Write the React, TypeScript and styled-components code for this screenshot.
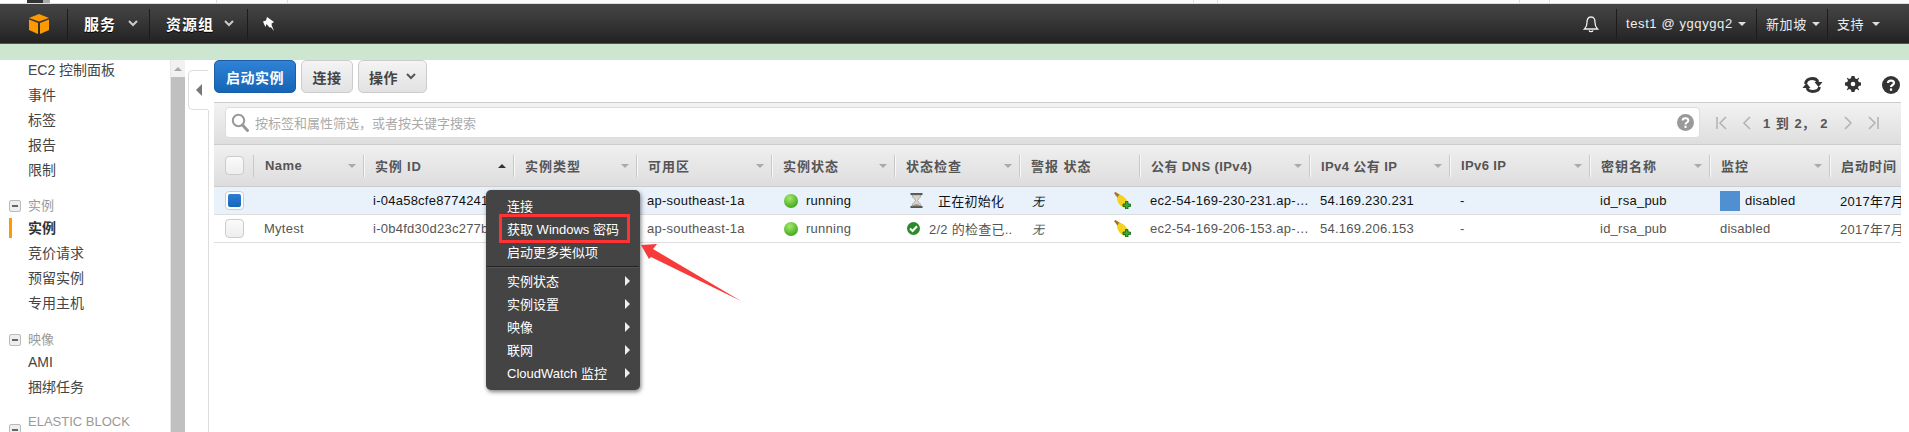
import React from "react";
import styled, { createGlobalStyle } from "styled-components";

const FONT = `"Liberation Sans", "Noto Sans CJK SC", sans-serif`;

const Global = createGlobalStyle`
  html, body { margin: 0; padding: 0; background: #fff; }
  body { font-family: ${FONT}; width: 1909px; height: 432px; overflow: hidden; }
  * { box-sizing: border-box; }
`;

const Page = styled.div`
  position: relative;
  width: 1909px;
  height: 432px;
  overflow: hidden;
  display: flex;
  flex-direction: column;
`;

/* remnant strip at the very top */
const TopStrip = styled.div`
  height: 4px;
  display: flex;
  flex: none;
  background: #fbfbfb;
  border-bottom: 1px solid #ddd;
`;
const StripCell = styled.div<{ $w: number; $dark?: boolean }>`
  width: ${(p) => p.$w}px;
  flex: none;
  border-right: 1px solid #ddd;
  background: ${(p) => (p.$dark ? "linear-gradient(90deg,#fff 0 27px,#333 27px 43px,#aaa 43px 50px,#fff 50px)" : "transparent")};
`;

const Nav = styled.header`
  height: 40px;
  flex: none;
  background: linear-gradient(#444 0%, #3c3c3c 30%, #222 100%);
  display: flex;
  align-items: center;
  color: #fff;
  border-bottom: 1px solid #555;
`;
const NavGroup = styled.div`
  display: flex;
  align-items: center;
  height: 100%;
`;
const NavSpacer = styled.div`
  flex: 1;
`;
const LogoBox = styled.div`
  width: 68px;
  height: 30px;
  padding: 5px 0 0 29px;
  border-right: 1px solid #1c1c1c;
  flex: none;
`;
const NavItem = styled.div<{ $w: number; $pl: number; $plain?: boolean }>`
  width: ${(p) => p.$w}px;
  height: 30px;
  padding-left: ${(p) => p.$pl}px;
  display: flex;
  align-items: center;
  font-size: 15px;
  font-weight: 700;
  letter-spacing: 1px;
  border-right: ${(p) => (p.$plain ? "none" : "1px solid #1c1c1c")};
  text-shadow: 0 1px 0 #000;
  flex: none;
  white-space: nowrap;
`;
const NavRightItem = styled.div<{ $w: number; $pl: number; $border?: boolean }>`
  width: ${(p) => p.$w}px;
  height: 30px;
  padding-left: ${(p) => p.$pl}px;
  display: flex;
  align-items: center;
  font-size: 13px;
  letter-spacing: 0.6px;
  border-right: ${(p) => (p.$border ? "1px solid #1c1c1c" : "none")};
  flex: none;
  white-space: nowrap;
  color: #eee;
`;
const Chevron = styled.svg<{ $ml: number }>`
  margin-left: ${(p) => p.$ml}px;
  flex: none;
`;
const Caret = styled.span<{ $ml: number }>`
  margin-left: ${(p) => p.$ml}px;
  width: 0;
  height: 0;
  border-left: 4px solid transparent;
  border-right: 4px solid transparent;
  border-top: 4px solid #ddd;
  flex: none;
`;

const Notice = styled.div`
  height: 16px;
  flex: none;
  background: #cde6d0;
`;

const Body = styled.div`
  flex: 1;
  min-height: 0;
  display: flex;
  overflow: hidden;
`;

const Sidebar = styled.nav`
  width: 171px;
  flex: none;
  overflow: hidden;
  border-right: 1px solid #e6e6e6;
`;
const SideList = styled.div`
  margin-top: -2px;
`;
const SideItem = styled.div<{ $active?: boolean }>`
  position: relative;
  height: 25px;
  line-height: 25px;
  padding-left: 28px;
  font-size: 14px;
  color: ${(p) => (p.$active ? "#333" : "#444")};
  font-weight: ${(p) => (p.$active ? 700 : 400)};
  white-space: nowrap;
  &::before {
    content: "";
    display: ${(p) => (p.$active ? "block" : "none")};
    position: absolute;
    left: 9px;
    top: 2px;
    width: 3px;
    height: 20px;
    background: #f90;
  }
`;
const SideHead = styled.div<{ $mt: number }>`
  display: flex;
  align-items: center;
  margin-top: ${(p) => p.$mt}px;
  padding-left: 9px;
  min-height: 20px;
  font-size: 13px;
  color: #999;
  line-height: 16px;
`;
const MinusBox = styled.span`
  width: 12px;
  height: 12px;
  margin-right: 7px;
  border: 1px solid #bbb;
  border-radius: 2px;
  background: #eee;
  display: flex;
  align-items: center;
  justify-content: center;
  flex: none;
  &::after {
    content: "";
    width: 6px;
    height: 2px;
    background: #666;
  }
`;

const Scrollbar = styled.div`
  width: 14px;
  flex: none;
  display: flex;
  flex-direction: column;
`;
const ScrollUp = styled.div`
  height: 17px;
  background: #f1f1f1;
  display: flex;
  align-items: center;
  justify-content: center;
  &::after {
    content: "";
    border-left: 4px solid transparent;
    border-right: 4px solid transparent;
    border-bottom: 4px solid #aaa;
  }
`;
const ScrollThumb = styled.div`
  flex: 1;
  background: #c0c0c0;
`;

const CollapseCol = styled.div`
  width: 23px;
  flex: none;
  padding: 10px 0 0 3px;
`;
const CollapseTab = styled.div`
  width: 20px;
  height: 40px;
  border: 1px solid #ddd;
  border-right: none;
  border-radius: 5px 0 0 5px;
  display: flex;
  align-items: center;
  justify-content: center;
  background: #fff;
  &::after {
    content: "";
    border-top: 6px solid transparent;
    border-bottom: 6px solid transparent;
    border-right: 6px solid #777;
  }
`;

const Main = styled.main`
  width: 1693px;
  flex: none;
  background: linear-gradient(90deg, #ddd 1px, transparent 1px) no-repeat 0 50px;
  padding-left: 6px;
  display: flex;
  flex-direction: column;
`;
const Toolbar = styled.div`
  height: 42px;
  flex: none;
  display: flex;
  gap: 5px;
`;
const Btn = styled.button<{ $w: number; $primary?: boolean }>`
  width: ${(p) => p.$w}px;
  height: 33px;
  border-radius: 5px;
  font: 700 14px ${FONT};
  letter-spacing: 0.5px;
  padding: 0;
  color: ${(p) => (p.$primary ? "#fff" : "#444")};
  border: 1px solid ${(p) => (p.$primary ? "#1a5fa8" : "#ccc")};
  background: ${(p) =>
    p.$primary ? "linear-gradient(#2f82d6,#1565b6)" : "linear-gradient(#f4f4f4,#e2e2e2)"};
  display: flex;
  align-items: center;
  justify-content: center;
`;
const ToolIcons = styled.div`
  margin-left: auto;
  width: 98px;
  padding: 16px 0 0 0;
  margin-right: 1px;
  display: flex;
  justify-content: space-between;
  align-items: flex-start;
`;

const FilterBand = styled.div`
  height: 43px;
  flex: none;
  background: linear-gradient(#f2f2f2, #dedede);
  border-top: 1px solid #ccc;
  border-bottom: 1px solid #ccc;
  display: flex;
  align-items: flex-start;
  padding: 4px 0 0 11px;
`;
const SearchBox = styled.div`
  width: 1475px;
  height: 31px;
  background: #fff;
  border: 1px solid #ddd;
  border-radius: 4px;
  display: flex;
  align-items: center;
  padding: 0 5px;
  flex: none;
`;
const Placeholder = styled.span`
  margin-left: 6px;
  flex: 1;
  font-size: 13px;
  color: #aaa;
`;
const Pager = styled.div`
  display: flex;
  align-items: center;
  height: 31px;
  padding-left: 15px;
  flex: none;
`;
const PagerText = styled.span`
  font-size: 13px;
  font-weight: 700;
  color: #555;
  margin: 0 14px 0 10px;
  word-spacing: 2px;
  white-space: nowrap;
`;
const PagerIcon = styled.svg<{ $mr?: number }>`
  margin-right: ${(p) => p.$mr ?? 0}px;
  flex: none;
`;

const COLS = "40px 110px 150px 123px 135px 123px 125px 120px 170px 140px 140px 120px 120px 71px";

const HeadRow = styled.div`
  display: grid;
  grid-template-columns: ${COLS};
  height: 42px;
  flex: none;
  align-items: center;
  background: linear-gradient(#f0f0f0, #dddddd);
  border-bottom: 1px solid #ccc;
  overflow: hidden;
`;
const HeadCell = styled.div<{ $sep?: boolean; $ls: number }>`
  height: 22px;
  display: flex;
  align-items: center;
  justify-content: space-between;
  padding: 0 7px 0 11px;
  font-size: 13px;
  font-weight: 700;
  color: #555;
  letter-spacing: ${(p) => p.$ls}px;
  white-space: nowrap;
  overflow: hidden;
  border-right: ${(p) => (p.$sep === false ? "none" : "1px solid #c8c8c8")};
  box-shadow: ${(p) => (p.$sep === false ? "none" : "1px 0 0 #f8f8f8")};
`;
const CheckCell = styled.div`
  height: 22px;
  padding: 0 0 0 11px;
  display: flex;
  align-items: center;
  border-right: 1px solid #c8c8c8;
`;
const Sort = styled.span<{ $up?: boolean }>`
  flex: none;
  border-left: 4px solid transparent;
  border-right: 4px solid transparent;
  ${(p) => (p.$up ? "border-bottom: 4px solid #333;" : "border-top: 4px solid #aaa;")}
`;
const Box = styled.span<{ $on?: boolean }>`
  width: 19px;
  height: 19px;
  flex: none;
  border: 1px solid #ccc;
  border-radius: 4px;
  background: ${(p) => (p.$on ? "#fff" : "linear-gradient(#fafafa,#eee)")};
  display: flex;
  align-items: center;
  justify-content: center;
  &::after {
    content: "";
    display: ${(p) => (p.$on ? "block" : "none")};
    width: 13px;
    height: 13px;
    border-radius: 2px;
    background: linear-gradient(#2c7fd4, #1766b8);
  }
`;
const Row = styled.div<{ $selected?: boolean }>`
  display: grid;
  grid-template-columns: ${COLS};
  height: 28px;
  flex: none;
  align-items: center;
  background: ${(p) => (p.$selected ? "#e9f1fb" : "#fff")};
  border-bottom: 1px solid #ddd;
  color: ${(p) => (p.$selected ? "#111" : "#555")};
  font-size: 13px;
  letter-spacing: 0.25px;
`;
const Cell = styled.div<{ $pl?: number }>`
  padding-left: ${(p) => p.$pl ?? 10}px;
  display: flex;
  align-items: center;
  white-space: nowrap;
  overflow: hidden;
  height: 100%;
`;
const Dot = styled.span`
  width: 14px;
  height: 14px;
  border-radius: 50%;
  flex: none;
  margin: 0 8px 0 2px;
  background: radial-gradient(circle at 40% 30%, #a6e86a, #4fb32a 65%, #2d8a1a);
`;
const NoAlarm = styled.span`
  font-style: italic;
  font-size: 12px;
`;
const Broom = styled.svg`
  margin-left: auto;
  margin-right: 9px;
  flex: none;
`;
const MonitorSquare = styled.span`
  width: 20px;
  height: 20px;
  background: #5090d0;
  margin-right: 5px;
  flex: none;
`;

const Menu = styled.div`
  position: absolute;
  left: 486px;
  top: 190px;
  width: 154px;
  height: 200px;
  background: #444;
  border-radius: 5px;
  box-shadow: 1px 2px 4px rgba(0, 0, 0, 0.5);
  padding-top: 4px;
  color: #fff;
  font-size: 13px;
`;
const MenuItem = styled.div`
  position: relative;
  height: 23px;
  padding: 0 10px 0 21px;
  display: flex;
  align-items: center;
  justify-content: space-between;
  white-space: nowrap;
`;
const MenuDivider = styled.div`
  height: 1px;
  margin: 3px 1px 2px;
  background: #222;
  box-shadow: 0 1px 0 #555;
`;
const MenuArrow = styled.span`
  border-top: 5px solid transparent;
  border-bottom: 5px solid transparent;
  border-left: 5px solid #eee;
`;
const Highlight = styled.span`
  position: absolute;
  left: 13px;
  top: -3px;
  width: 131px;
  height: 29px;
  border: 3px solid #f33;
`;
const ArrowMark = styled.svg`
  position: absolute;
  left: 636px;
  top: 240px;
`;

const Cube = () => (
  <svg width="20" height="20" viewBox="0 0 20 20">
    <path d="M10 0 L20 4 L10 7.5 L0 4Z" fill="#f90" />
    <path d="M0 5.5 L9 9 V20 L0 16Z" fill="#f90" />
    <path d="M20 5.5 L11 9 V20 L20 16Z" fill="#f90" />
  </svg>
);
const Down = ({ ml, color = "#ccc" }: { ml: number; color?: string }) => (
  <Chevron $ml={ml} width="10" height="7" viewBox="0 0 10 7">
    <path d="M1 1 L5 5 L9 1" fill="none" stroke={color} strokeWidth="2" />
  </Chevron>
);
const Pin = () => (
  <svg width="14" height="14" viewBox="0 0 14 14">
    <path d="M5 0 L12 5 L9.5 6.5 L10 10 L7.5 10.5 L4.5 7 L3.5 10 L2 7 L1 4.5 L4 3.5Z" fill="#fff" />
    <path d="M8 9 L12 14 L10 9Z" fill="#fff" />
  </svg>
);
const Bell = () => (
  <svg width="16" height="18" viewBox="0 0 16 18" fill="none" stroke="#eee" strokeWidth="1.3">
    <path d="M8 2 C4.5 2 4 5 4 7.5 C4 11 3 12.5 1.5 14 H14.5 C13 12.5 12 11 12 7.5 C12 5 11.5 2 8 2Z" />
    <path d="M6 15.5 C6.5 17 9.5 17 10 15.5" />
  </svg>
);
const Refresh = () => (
  <svg width="21" height="18" viewBox="0 0 21 18">
    <path d="M3.5 8 C4 4 7 2.5 10.5 2.5 C13 2.5 15 3.5 16 6" fill="none" stroke="#333" strokeWidth="2.8" />
    <path d="M12.5 6 H20.5 L16.5 11Z" fill="#333" />
    <path d="M17.5 11 C17 14 14 15.5 10.5 15.5 C8 15.5 6 14.5 5 12" fill="none" stroke="#333" strokeWidth="2.8" />
    <path d="M8.5 12 H0.5 L4.5 7Z" fill="#333" />
  </svg>
);
const Gear = () => (
  <svg width="16" height="16" viewBox="0 0 16 16">
    <path
      d="M6.5 0 H9.5 L10 2.3 L11.8 3 L13.8 1.8 L14.2 2.2 L14.2 2.2 L13 4.2 L13.7 6 L16 6.5 V9.5 L13.7 10 L13 11.8 L14.2 13.8 L13.8 14.2 L11.8 13 L10 13.7 L9.5 16 H6.5 L6 13.7 L4.2 13 L2.2 14.2 L1.8 13.8 L3 11.8 L2.3 10 L0 9.5 V6.5 L2.3 6 L3 4.2 L1.8 2.2 L2.2 1.8 L4.2 3 L6 2.3Z M8 5.7 A2.3 2.3 0 1 0 8 10.3 A2.3 2.3 0 1 0 8 5.7Z"
      fill="#333"
      fillRule="evenodd"
    />
  </svg>
);
const Help = ({ size, color }: { size: number; color: string }) => (
  <svg width={size} height={size} viewBox="0 0 18 18">
    <circle cx="9" cy="9" r="9" fill={color} />
    <path d="M6 7 C6 3.7 12 3.7 12 7 C12 9 9 9 9 11" fill="none" stroke="#fff" strokeWidth="2.2" />
    <rect x="7.9" y="12.4" width="2.2" height="2.4" fill="#fff" />
  </svg>
);
const Search = () => (
  <svg width="18" height="19" viewBox="0 0 18 19" fill="none">
    <circle cx="7.5" cy="7.5" r="5.7" stroke="#999" strokeWidth="2" />
    <path d="M11.5 12 L16.5 17.5" stroke="#999" strokeWidth="3" strokeLinecap="round" />
  </svg>
);
const PageIcon = ({ d, mr }: { d: string; mr?: number }) => (
  <PagerIcon $mr={mr} width="13" height="14" viewBox="0 0 13 14" fill="none" stroke="#b4b4b4" strokeWidth="1.6">
    <path d={d} />
  </PagerIcon>
);
const HourglassSvg = styled.svg`
  margin-left: 3px;
  margin-right: 15px;
  flex: none;
`;
const Hourglass = () => (
  <HourglassSvg width="13" height="15" viewBox="0 0 13 15">
    <rect x="0.5" y="0" width="12" height="2" fill="#555" />
    <rect x="0.5" y="13" width="12" height="2" fill="#555" />
    <path d="M2 2 H11 C11 5 7.5 6 7.5 7.5 C7.5 9 11 10 11 13 H2 C2 10 5.5 9 5.5 7.5 C5.5 6 2 5 2 2Z" fill="#d9d4c4" stroke="#888" strokeWidth="0.6" />
    <path d="M3 13 C4 10.5 9 10.5 10 13Z" fill="#9a8f70" />
  </HourglassSvg>
);
const CheckSvg = styled.svg`
  margin-right: 9px;
  flex: none;
`;
const Check = () => (
  <CheckSvg width="13" height="13" viewBox="0 0 13 13">
    <circle cx="6.5" cy="6.5" r="6.5" fill="#2a8a2a" />
    <path d="M3 6.5 L5.6 9 L10 4.2" fill="none" stroke="#fff" strokeWidth="2" />
  </CheckSvg>
);
const BroomIcon = () => (
  <Broom width="17" height="17" viewBox="0 0 17 17">
    <path d="M0 1 L1.5 0 L7 3.5 L4 6.5Z" fill="#a8741a" />
    <path d="M5 3 C8.5 3 13 6 14 12 L11 16 C7 15.5 3 10.5 3 6Z" fill="#f5d21f" />
    <path d="M11.5 9.5 H14 V12 H16.5 V14.5 H14 V17 H11.5 V14.5 H9 V12 H11.5Z" fill="#35b035" stroke="#0e5c0e" strokeWidth="0.8" />
  </Broom>
);

const columns: { label: string; sort?: "up" | "down" | "none"; sep?: boolean; ls: number }[] = [
  { label: "Name", ls: 0.4 },
  { label: "实例 ID", sort: "up", ls: 0.8 },
  { label: "实例类型", ls: 1 },
  { label: "可用区", ls: 1 },
  { label: "实例状态", ls: 1 },
  { label: "状态检查", ls: 1 },
  { label: "警报 状态", sort: "none", ls: 1 },
  { label: "公有 DNS (IPv4)", ls: 0.4 },
  { label: "IPv4 公有 IP", ls: 0.4 },
  { label: "IPv6 IP", ls: 0.4 },
  { label: "密钥名称", ls: 1 },
  { label: "监控", ls: 1 },
  { label: "启动时间", sort: "none", sep: false, ls: 1 },
];

const rows = [
  {
    selected: true,
    name: "",
    id: "i-04a58cfe87742412",
    check: "正在初始化",
    dns: "ec2-54-169-230-231.ap-…",
    ip: "54.169.230.231",
  },
  {
    selected: false,
    name: "Mytest",
    id: "i-0b4fd30d23c277b1",
    check: "2/2 的检查已..",
    dns: "ec2-54-169-206-153.ap-…",
    ip: "54.169.206.153",
  },
];

const menuTop = ["连接", "获取 Windows 密码", "启动更多类似项"];
const menuSub = ["实例状态", "实例设置", "映像", "联网", "CloudWatch 监控"];

export default function App() {
  return (
    <Page>
      <Global />
      <TopStrip>
        <StripCell $w={217} $dark />
        <StripCell $w={71} />
        <StripCell $w={906} />
        <StripCell $w={24} />
        <StripCell $w={302} />
        <StripCell $w={30} />
      </TopStrip>
      <Nav>
        <NavGroup>
          <LogoBox>
            <Cube />
          </LogoBox>
          <NavItem $w={82} $pl={16}>
            服务
            <Down ml={12} />
          </NavItem>
          <NavItem $w={98} $pl={16}>
            资源组
            <Down ml={10} />
          </NavItem>
          <NavItem $w={40} $pl={14} $plain>
            <Pin />
          </NavItem>
        </NavGroup>
        <NavSpacer />
        <NavGroup>
          <NavRightItem $w={34} $pl={0} $border>
            <Bell />
          </NavRightItem>
          <NavRightItem $w={140} $pl={9} $border>
            test1 @ ygqygq2
            <Caret $ml={5} />
          </NavRightItem>
          <NavRightItem $w={71} $pl={9} $border>
            新加坡
            <Caret $ml={5} />
          </NavRightItem>
          <NavRightItem $w={81} $pl={9}>
            支持
            <Caret $ml={8} />
          </NavRightItem>
        </NavGroup>
      </Nav>
      <Notice />
      <Body>
        <Sidebar>
          <SideList>
            <SideItem>EC2 控制面板</SideItem>
            <SideItem>事件</SideItem>
            <SideItem>标签</SideItem>
            <SideItem>报告</SideItem>
            <SideItem>限制</SideItem>
            <SideHead $mt={13}>
              <MinusBox />
              实例
            </SideHead>
            <SideItem $active>实例</SideItem>
            <SideItem>竞价请求</SideItem>
            <SideItem>预留实例</SideItem>
            <SideItem>专用主机</SideItem>
            <SideHead $mt={14}>
              <MinusBox />
              映像
            </SideHead>
            <SideItem>AMI</SideItem>
            <SideItem>捆绑任务</SideItem>
            <SideHead $mt={14}>
              <MinusBox />
              ELASTIC BLOCK
              <br />
              STORE
            </SideHead>
          </SideList>
        </Sidebar>
        <Scrollbar>
          <ScrollUp />
          <ScrollThumb />
        </Scrollbar>
        <CollapseCol>
          <CollapseTab />
        </CollapseCol>
        <Main>
          <Toolbar>
            <Btn $w={82} $primary>
              启动实例
            </Btn>
            <Btn $w={52}>连接</Btn>
            <Btn $w={69}>
              操作
              <Down ml={8} color="#555" />
            </Btn>
            <ToolIcons>
              <Refresh />
              <Gear />
              <Help size={18} color="#333" />
            </ToolIcons>
          </Toolbar>
          <FilterBand>
            <SearchBox>
              <Search />
              <Placeholder>按标签和属性筛选，或者按关键字搜索</Placeholder>
              <Help size={17} color="#999" />
            </SearchBox>
            <Pager>
              <PageIcon d="M2 1 V13 M11 1 L5 7 L11 13" mr={12} />
              <PageIcon d="M10 1 L4 7 L10 13" />
              <PagerText>1 到 2， 2</PagerText>
              <PageIcon d="M3 1 L9 7 L3 13" mr={12} />
              <PageIcon d="M11 1 V13 M2 1 L8 7 L2 13" />
            </Pager>
          </FilterBand>
          <HeadRow>
            <CheckCell>
              <Box />
            </CheckCell>
            {columns.map((c) => (
              <HeadCell key={c.label} $sep={c.sep} $ls={c.ls}>
                {c.label}
                {c.sort !== "none" && <Sort $up={c.sort === "up"} />}
              </HeadCell>
            ))}
          </HeadRow>
          {rows.map((r) => (
            <Row key={r.id} $selected={r.selected}>
              <Cell $pl={11}>
                <Box $on={r.selected} />
              </Cell>
              <Cell $pl={10}>{r.name}</Cell>
              <Cell $pl={9}>{r.id}</Cell>
              <Cell />
              <Cell>ap-southeast-1a</Cell>
              <Cell $pl={10}>
                <Dot />
                running
              </Cell>
              <Cell $pl={12}>
                {r.selected ? <Hourglass /> : <Check />}
                {r.check}
              </Cell>
              <Cell $pl={12}>
                <NoAlarm>无</NoAlarm>
                <BroomIcon />
              </Cell>
              <Cell>{r.dns}</Cell>
              <Cell>{r.ip}</Cell>
              <Cell>-</Cell>
              <Cell>id_rsa_pub</Cell>
              <Cell>
                {r.selected && <MonitorSquare />}
                disabled
              </Cell>
              <Cell>2017年7月</Cell>
            </Row>
          ))}
        </Main>
      </Body>
      <Menu>
        {menuTop.map((m, i) => (
          <MenuItem key={m}>
            {m}
            {i === 1 && <Highlight />}
          </MenuItem>
        ))}
        <MenuDivider />
        {menuSub.map((m) => (
          <MenuItem key={m}>
            {m}
            <MenuArrow />
          </MenuItem>
        ))}
      </Menu>
      <ArrowMark width="110" height="65" viewBox="0 0 110 65">
        <path d="M5 5 L21 4 L17 9 L105 61 L15 17 L13 19Z" fill="#f73b3b" />
      </ArrowMark>
    </Page>
  );
}
